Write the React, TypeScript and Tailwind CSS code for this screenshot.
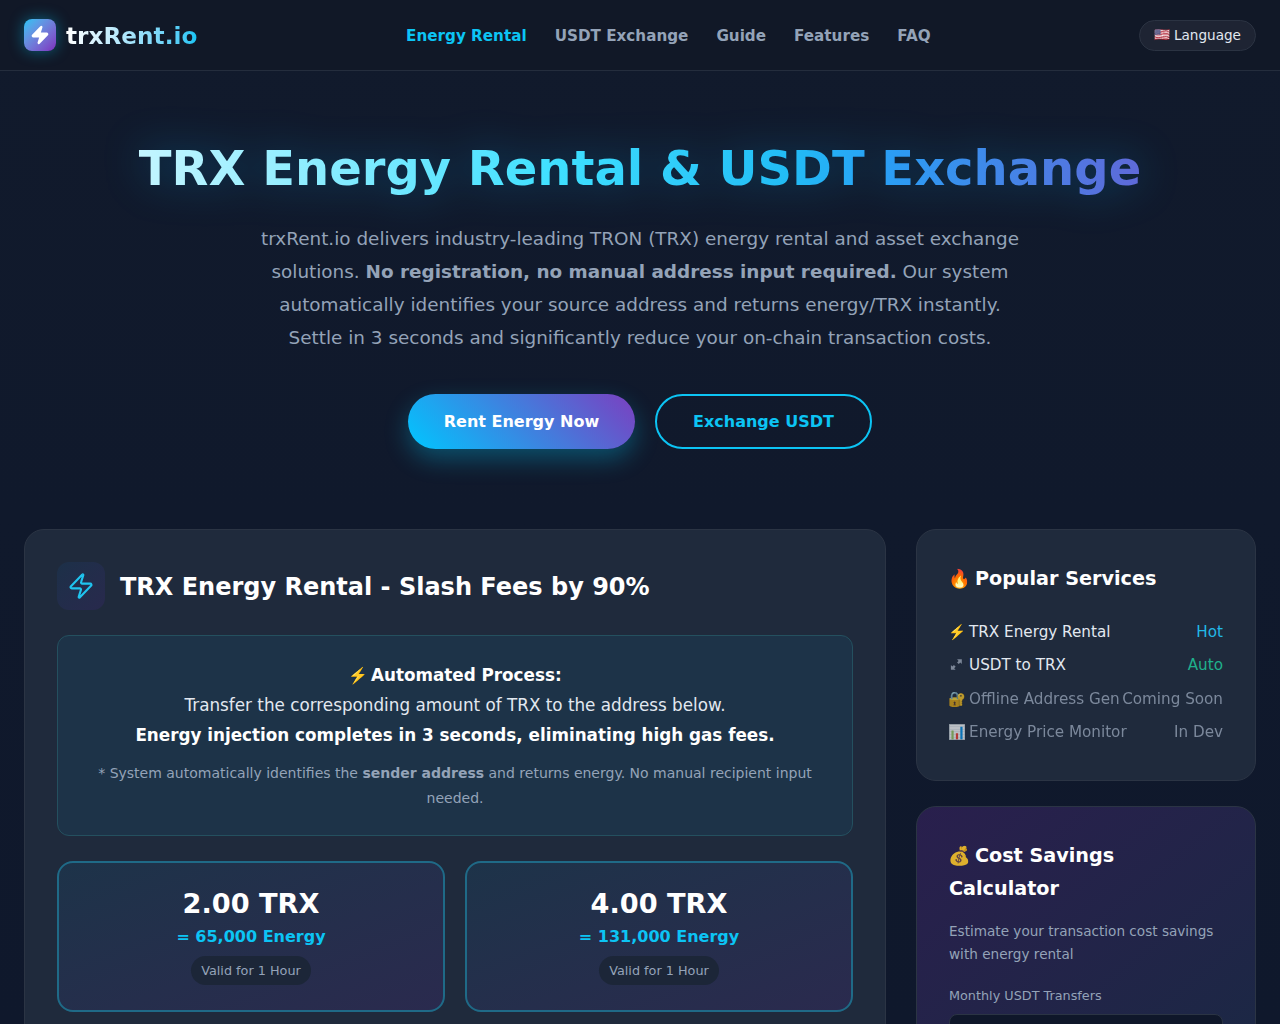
import { Zap } from 'lucide-react'

const navLinks = ['Energy Rental', 'USDT Exchange', 'Guide', 'Features', 'FAQ']

const services = [
  { icon: '⚡️', name: 'TRX Energy Rental', tag: 'Hot', tagClass: 'text-[#22b8e6]', dim: false },
  { icon: 'arrows', name: 'USDT to TRX', tag: 'Auto', tagClass: 'text-[#1fb08c]', dim: false },
  { icon: '🔐', name: 'Offline Address Gen', tag: 'Coming Soon', tagClass: '', dim: true },
  { icon: '📊', name: 'Energy Price Monitor', tag: 'In Dev', tagClass: '', dim: true },
]

const plans = [
  { price: '2.00 TRX', energy: '= 65,000 Energy' },
  { price: '4.00 TRX', energy: '= 131,000 Energy' },
]

// colour emoji take a full 1em slot here, not the wider advance the font gives them
function Emoji({ char }: { char: string }) {
  return <span className="inline-block w-[1.053em] -indent-[0.05em] text-[0.95em] leading-none whitespace-nowrap">{char}</span>
}

function ArrowsIcon() {
  return (
    <svg viewBox="0 0 16 16" className="inline-block h-[1em] w-[1em] align-[-2px]" fill="#7c8798">
      <path d="M8.5 2.5h5v5l-1.6-1.6-1.6 1.6-1.8-1.8 1.6-1.6z" />
      <path d="M7 13.5H2v-5l1.6 1.6 1.6-1.6 1.8 1.8-1.6 1.6z" />
    </svg>
  )
}

export default function App() {
  return (
    <div className="h-screen overflow-hidden bg-gradient-to-b from-[#111a2c] to-[#0f182c] font-['DejaVu_Sans',sans-serif] text-white">
      <header className="flex h-[71px] items-center justify-between border-b border-[#242d3d] bg-[#111827] px-6">
        <div className="flex items-center gap-2.5">
          <span className="flex h-8 w-8 items-center justify-center rounded-lg bg-gradient-to-br from-[#0cc4f4] to-[#7b2cbf] shadow-[0_0_15px_rgba(0,210,255,0.4)]">
            <Zap size={20} fill="white" stroke="white" />
          </span>
          <span className="mt-0.5 bg-gradient-to-r from-white to-[#0cc4f4] bg-clip-text text-[23.2px] font-bold text-transparent">trxRent.io</span>
        </div>
        <nav className="mt-0.5 flex gap-7">
          {navLinks.map((l, i) => (
            <a key={l} className={`text-[15.2px] font-semibold ${i === 0 ? 'text-[#0cc4f4]' : 'text-[#94a3b8]'}`}>{l}</a>
          ))}
        </nav>
        <button className="flex h-[31px] items-center gap-1.5 rounded-full border border-[#2b3342] bg-[#1e2433] px-3.5 text-[13.6px] text-[#e2e8f0]">
          <Emoji char="🇺🇸" />
          Language
        </button>
      </header>

      <section className="flex flex-col items-center px-6 pt-[68px] pb-20">
        <h1 className="w-full bg-[linear-gradient(90deg,#e8fbff_0%,#3fe0ff_43%,#22bcf5_62%,#2a9ef5_70%,#6068d8_91%,#7b50cc_100%)] bg-clip-text text-center text-[48px] leading-[58px] font-bold text-transparent drop-shadow-[0_0_20px_rgba(0,180,255,0.3)]">
          TRX Energy Rental &amp; USDT Exchange
        </h1>
        <p className="mt-[25px] w-[770px] text-center text-[18.4px] leading-[33px] text-[#94a3b8]">
          trxRent.io delivers industry-leading TRON (TRX) energy rental and asset exchange solutions. <strong>No registration, no manual address input required.</strong> Our system automatically identifies your source address and returns energy/TRX instantly. Settle in 3 seconds and significantly reduce your on-chain transaction costs.
        </p>
        <div className="mt-10 flex gap-5">
          <button className="h-[55px] w-[227px] rounded-full bg-[linear-gradient(45deg,#00c6ff,#7b3fc0)] font-bold shadow-[0_10px_25px_rgba(0,210,255,0.3)]">Rent Energy Now</button>
          <button className="h-[55px] w-[217px] rounded-full border-2 border-[#0cc4f4] font-bold text-[#0cc4f4]">Exchange USDT</button>
        </div>
      </section>

      <main className="grid grid-cols-[1fr_340px] gap-[30px] px-6">
        <div className="rounded-[20px] border border-[#2b3444] bg-[#1f2a3c] p-8">
          <div className="mb-[25px] flex items-center gap-[15px]">
            <span className="flex h-12 w-12 items-center justify-center rounded-xl bg-gradient-to-br from-[#1c3048] to-[#28294d]">
              <Zap size={28} stroke="#1fc4ef" strokeWidth={1.8} />
            </span>
            <h2 className="mt-0.5 text-2xl font-bold">TRX Energy Rental - Slash Fees by 90%</h2>
          </div>
          <div className="rounded-xl border border-[#24505f] bg-[#1d3348] px-6 py-6 text-center">
            <p className="text-[16.8px] leading-[30.24px] text-[#e2e8f0]">
              <strong className="text-white"><Emoji char="⚡️" /> Automated Process:</strong>
              <br />
              Transfer the corresponding amount of TRX to the address below.
              <br />
              <strong className="text-white">Energy injection completes in 3 seconds, eliminating high gas fees.</strong>
            </p>
            <p className="mt-2.5 text-sm leading-[25px] text-[#94a3b8]">
              * System automatically identifies the <strong>sender address</strong> and returns energy. No manual recipient input needed.
            </p>
          </div>
          <div className="mt-[25px] grid grid-cols-2 gap-5">
            {plans.map((p) => (
              <div key={p.price} className="flex h-[151px] flex-col items-center rounded-2xl border-2 border-[#1f6a87] bg-gradient-to-br from-[#1d3349] to-[#2a2a4e] pt-[23px]">
                <div className="text-[27.2px] leading-[36px] font-bold">{p.price}</div>
                <div className="mt-[3px] text-base font-bold text-[#0cc4f4]">{p.energy}</div>
                <div className="mt-[7px] rounded-full bg-[#1c2638] px-2.5 py-[5px] text-[12.8px] leading-[19px] text-[#94a3b8]">Valid for 1 Hour</div>
              </div>
            ))}
          </div>
        </div>

        <aside className="flex flex-col gap-[25px]">
          <div className="rounded-[20px] border border-[#2b3444] bg-[#1f2a3c] px-8 pt-[33px] pb-[34.2px]">
            <h3 className="mb-[24.3px] text-[19.2px] leading-[32.64px] font-bold"><Emoji char="🔥" /> Popular Services</h3>
            <ul className="flex flex-col gap-[7.5px]">
              {services.map((s) => (
                <li key={s.name} className={`flex justify-between text-[15.2px] leading-[25.84px] whitespace-nowrap ${s.dim ? 'text-[#a3b0c4] opacity-70' : 'text-[#e2e8f0]'}`}>
                  <span>{s.icon === 'arrows' ? <ArrowsIcon /> : <Emoji char={s.icon} />} {s.name}</span>
                  <span className={s.tagClass}>{s.tag}</span>
                </li>
              ))}
            </ul>
          </div>
          <div className="rounded-[20px] border border-[#2b3444] bg-gradient-to-br from-[#291f4d] to-[#1a2844] px-8 pt-[33px]">
            <h3 className="text-[19.2px] leading-[32.64px] font-bold"><span className="opacity-85"><Emoji char="💰" /></span> Cost Savings Calculator</h3>
            <p className="mt-[15px] text-[13.6px] leading-[23.1px] text-[#94a3b8]">Estimate your transaction cost savings with energy rental</p>
            <label className="mt-[18.5px] block text-[12.8px] leading-[21.76px] text-[#94a3b8]">Monthly USDT Transfers</label>
            <div className="mt-[7px] mb-8 h-10 rounded-lg border border-[#2b3444] bg-[#0f172a]" />
          </div>
        </aside>
      </main>
    </div>
  )
}
